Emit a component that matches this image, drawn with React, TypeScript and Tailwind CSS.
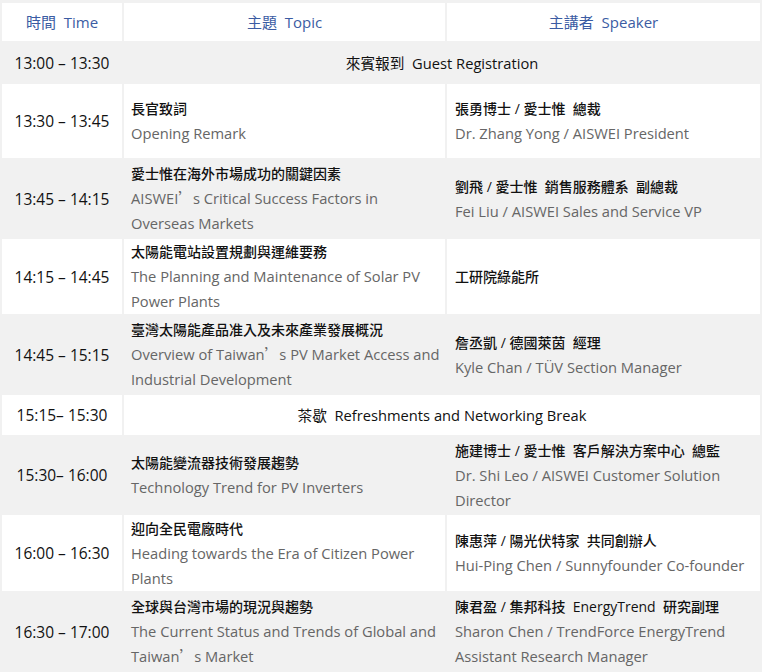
const latin = '"Open Sans", "Noto Sans CJK TC", sans-serif';
const cjk = '"Noto Sans CJK TC", sans-serif';

type Row = {
  time: string;
  h: string;
  span?: string;
  topic?: string[];
  speaker?: string[];
};

const rows: Row[] = [
  { time: '13:00 – 13:30', h: 'h-[39px]', span: '來賓報到  Guest Registration' },
  {
    time: '13:30 – 13:45',
    h: 'h-[74px]',
    topic: ['長官致詞', 'Opening Remark'],
    speaker: ['張勇博士 / 愛士惟  總裁', 'Dr. Zhang Yong / AISWEI President'],
  },
  {
    time: '13:45 – 14:15',
    h: 'h-[77px]',
    topic: ['愛士惟在海外市場成功的關鍵因素', 'AISWEI’s Critical Success Factors in', 'Overseas Markets'],
    speaker: ['劉飛 / 愛士惟  銷售服務體系  副總裁', 'Fei Liu / AISWEI Sales and Service VP'],
  },
  {
    time: '14:15 – 14:45',
    h: 'h-[75px]',
    topic: ['太陽能電站設置規劃與運維要務', 'The Planning and Maintenance of Solar PV', 'Power Plants'],
    speaker: ['工研院綠能所'],
  },
  {
    time: '14:45 – 15:15',
    h: 'h-[77px]',
    topic: ['臺灣太陽能產品准入及未來產業發展概況', 'Overview of Taiwan’s PV Market Access and', 'Industrial Development'],
    speaker: ['詹丞凱 / 德國萊茵  經理', 'Kyle Chan / TÜV Section Manager'],
  },
  { time: '15:15– 15:30', h: 'h-[40px]', span: '茶歇  Refreshments and Networking Break' },
  {
    time: '15:30– 16:00',
    h: 'h-[76px]',
    topic: ['太陽能變流器技術發展趨勢', 'Technology Trend for PV Inverters'],
    speaker: ['施建博士 / 愛士惟  客戶解決方案中心  總監', 'Dr. Shi Leo / AISWEI Customer Solution', 'Director'],
  },
  {
    time: '16:00 – 16:30',
    h: 'h-[76px]',
    topic: ['迎向全民電廠時代', 'Heading towards the Era of Citizen Power', 'Plants'],
    speaker: ['陳惠萍 / 陽光伏特家  共同創辦人', 'Hui-Ping Chen / Sunnyfounder Co-founder'],
  },
  {
    time: '16:30 – 17:00',
    h: 'h-[77px]',
    topic: ['全球與台灣市場的現況與趨勢', 'The Current Status and Trends of Global and', 'Taiwan’s Market'],
    speaker: ['陳君盈 / 集邦科技  EnergyTrend  研究副理', 'Sharon Chen / TrendForce EnergyTrend', 'Assistant Research Manager'],
  },
];

// the curly apostrophe is drawn full width, as the CJK font does it
function Text({ s }: { s: string }) {
  const parts = s.split('’');
  return (
    <>
      {parts.map((p, i) => (
        <span key={i}>
          {p}
          {i < parts.length - 1 && (
            <span className="leading-none" style={{ fontFamily: cjk }}>
              ’
            </span>
          )}
        </span>
      ))}
    </>
  );
}

function Lines({ lines }: { lines: string[] }) {
  return (
    <div className="leading-[25px]">
      {lines.map((l, i) =>
        i === 0 ? (
          <div key={i} className="whitespace-pre text-[14px] font-medium text-[#111]">
            {l}
          </div>
        ) : (
          <div key={i} className="whitespace-nowrap text-[14.7px] text-[#666]">
            <Text s={l} />
          </div>
        )
      )}
    </div>
  );
}

export default function App() {
  return (
    <div className="min-h-screen bg-[#f1f1f1] pt-px" style={{ fontFamily: latin }}>
      <table className="w-[762px] table-fixed border-separate border-spacing-[2px]">
        <colgroup>
          <col className="w-[120px]" />
          <col className="w-[321px]" />
          <col />
        </colgroup>
        <thead>
          <tr className="h-[38px] bg-white text-[15px] leading-[22px] text-[#3b5ca3]">
            <th className="p-0 text-center font-normal whitespace-pre">時間  Time</th>
            <th className="p-0 text-center font-normal whitespace-pre">主題  Topic</th>
            <th className="p-0 text-center font-normal whitespace-pre">主講者  Speaker</th>
          </tr>
        </thead>
        <tbody>
          {rows.map((r, i) => {
            const bg = i % 2 === 0 ? 'bg-[#f1f1f1]' : 'bg-white';
            if (r.span) {
              return (
                <tr key={r.time} className={`${r.h} ${bg}`}>
                  <td className="p-0 text-center text-[15.5px] leading-[22px] text-[#111] whitespace-pre">{r.time}</td>
                  <td colSpan={2} className="p-0 text-center text-[14.7px] leading-[22px] text-[#111] whitespace-pre">
                    {r.span}
                  </td>
                </tr>
              );
            }
            return (
              <tr key={r.time} className={`${r.h} ${bg}`}>
                <td className="p-0 text-center text-[15.5px] leading-[22px] text-[#111] whitespace-pre">{r.time}</td>
                <td className="py-0 pl-[7px] pr-1 align-middle">
                  <Lines lines={r.topic!} />
                </td>
                <td className="py-0 pl-[8px] pr-1 align-middle">
                  <Lines lines={r.speaker!} />
                </td>
              </tr>
            );
          })}
        </tbody>
      </table>
    </div>
  );
}
